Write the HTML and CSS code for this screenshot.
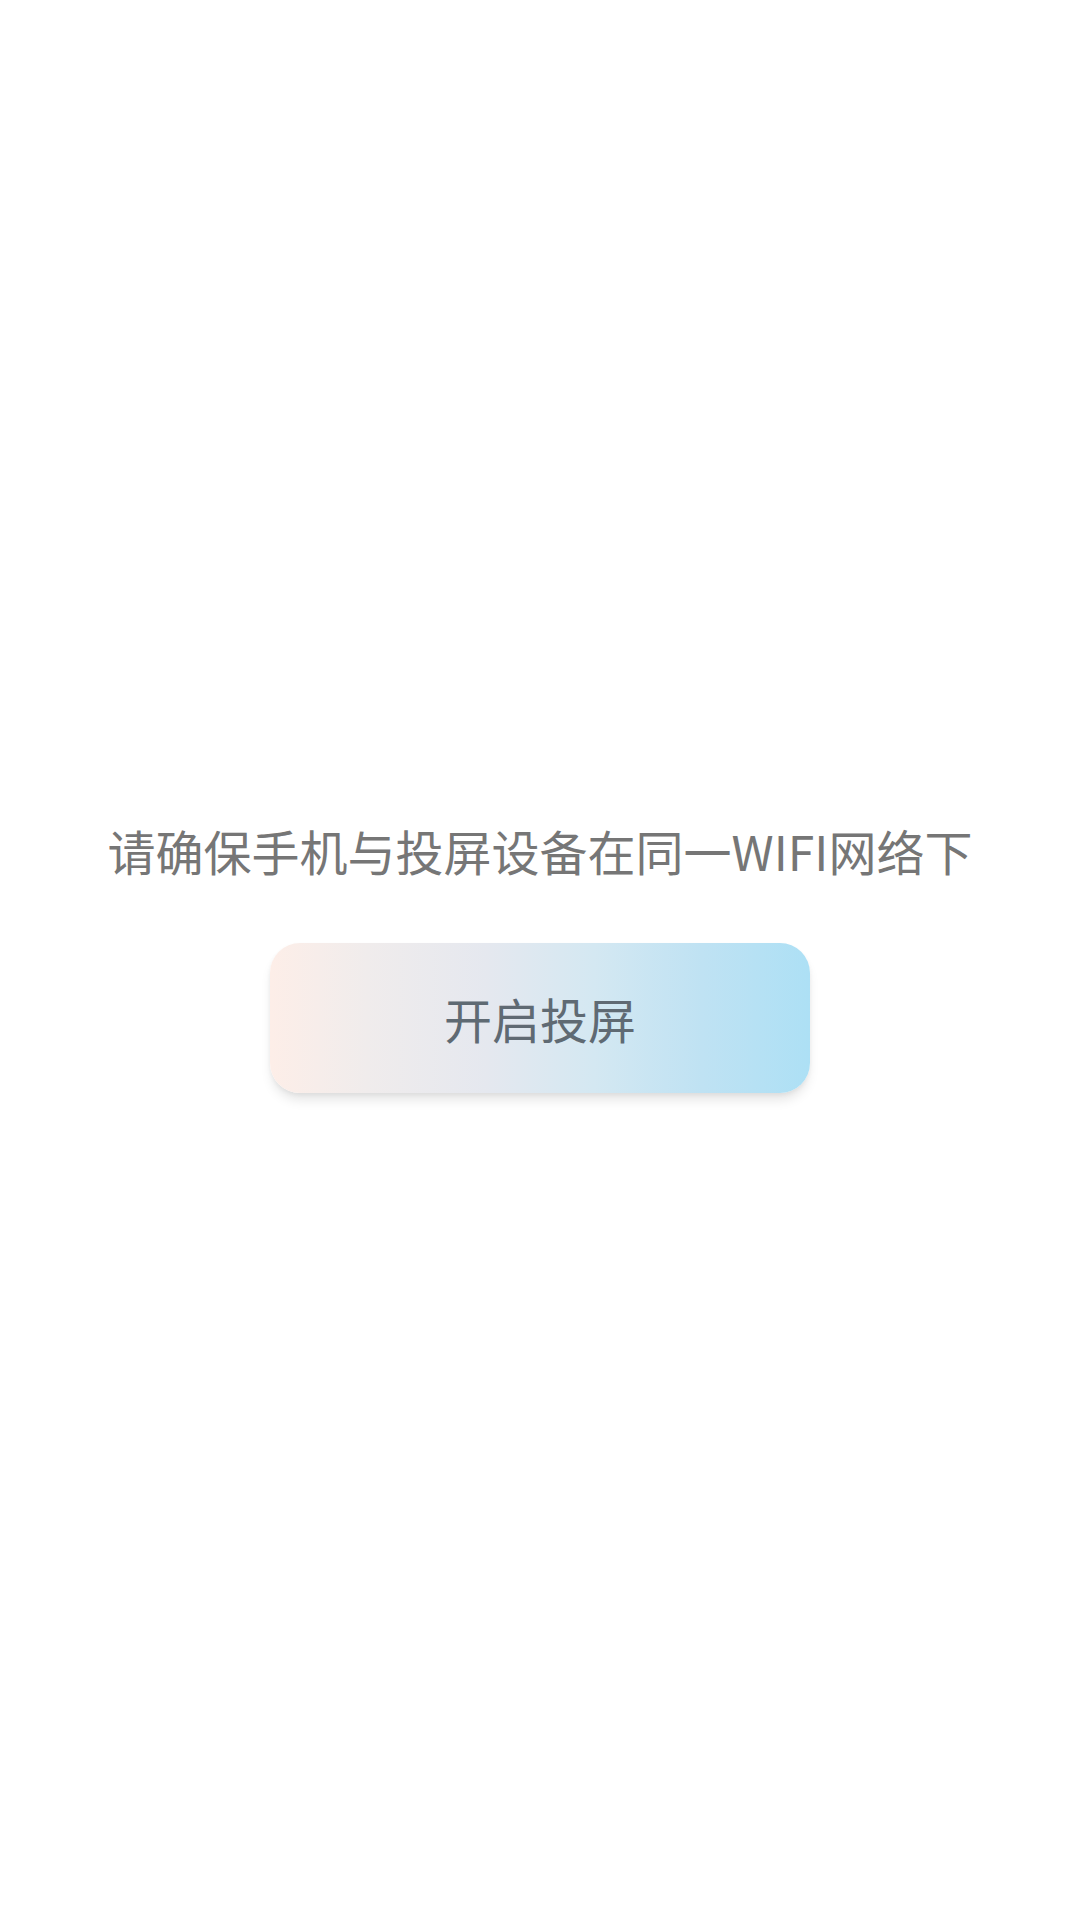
FILE: index.html
```html
<!DOCTYPE html>
<html lang="zh-CN">
<head>
<meta charset="utf-8">
<title>投屏</title>
<link rel="stylesheet" href="styles.css">
</head>
<body>
<main class="screen">
  <p class="hint">请确保手机与投屏设备在同一WIFI网络下</p>
  <button class="cast-btn" type="button">开启投屏</button>
</main>
</body>
</html>
```
FILE: styles.css
```css
html, body {
  margin: 0;
  padding: 0;
  background: #ffffff;
}
body {
  font-family: "Noto Sans CJK SC", "Noto Sans", sans-serif;
}
.screen {
  width: 1080px;
  height: 1920px;
  display: flex;
  flex-direction: column;
  align-items: center;
  box-sizing: border-box;
  padding-top: 817px;
}
.hint {
  margin: 0;
  font-size: 48px;
  line-height: 66px;
  color: #767676;
  font-weight: 400;
  letter-spacing: 0;
}
.cast-btn {
  margin-top: 60px;
  width: 540px;
  height: 150px;
  border: none;
  border-radius: 30px;
  background: linear-gradient(90deg, #fdeee8 0%, #f0ecec 18%, #e5e8ef 40%, #d4e8f2 60%, #bfe2f3 80%, #ade0f5 100%);
  box-shadow: 0 9px 12px -2px rgba(0, 0, 0, 0.10), 0 2px 4px rgba(0, 0, 0, 0.05);
  font-family: "Noto Sans CJK SC", "Noto Sans", sans-serif;
  font-size: 48px;
  color: #5f6a73;
  padding: 0;
  cursor: pointer;
}
```
